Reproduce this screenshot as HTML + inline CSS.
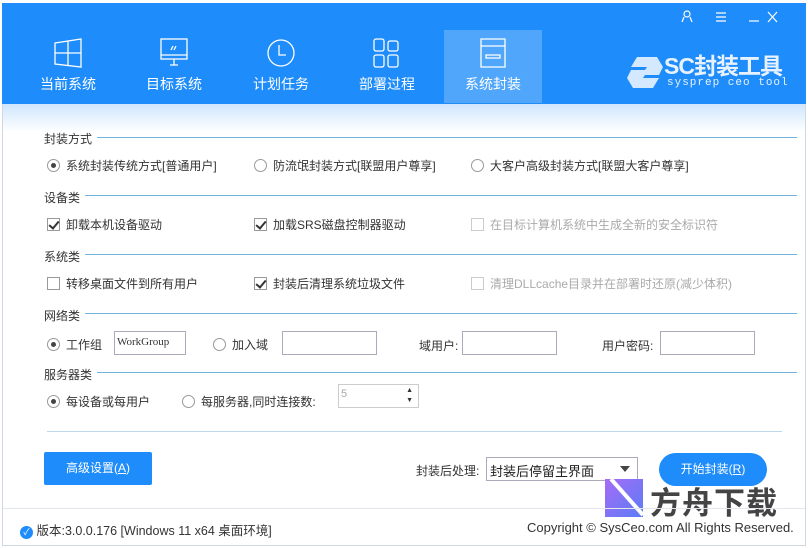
<!DOCTYPE html>
<html><head><meta charset="utf-8"><style>
*{margin:0;padding:0;box-sizing:border-box}
body{width:808px;height:548px;background:#fff;font-family:"Liberation Sans","Noto Sans CJK SC",sans-serif;font-size:12px;color:#333;position:relative;overflow:hidden}
.win{position:absolute;left:2px;top:3px;width:804px;height:543px;border:1px solid #cfd8e0;border-top:none;background:#fff}
.hdr{position:absolute;left:2px;top:3px;width:804px;height:101px;background:#1e8cfa}
.grad{position:absolute;left:3px;top:104px;width:802px;height:28px;background:linear-gradient(#cfe6fd,#fff)}
.tab{position:absolute;top:30px;width:98px;height:73px;color:#fff;font-size:14px;text-align:center}
.tab svg{display:block;margin:8px auto 6px}
.tab.sel{background:#4fa6fb}
.sec{position:absolute;left:44px;font-size:12px;color:#333}
.line{position:absolute;height:1px;background:#6fb4dc}
.it{position:absolute;font-size:12px;color:#333;white-space:nowrap}
.it.dis{color:#aaa}
.rb{display:inline-block;width:13px;height:13px;border:1px solid #999;border-radius:50%;vertical-align:-2px;margin-right:6px;position:relative;background:#fff}
.rb.on::after{content:"";position:absolute;left:3px;top:3px;width:5px;height:5px;border-radius:50%;background:#444}
.cb{display:inline-block;width:13px;height:13px;border:1px solid #999;vertical-align:-2px;margin-right:6px;position:relative;background:#fff}
.cb.on::after{content:"";position:absolute;left:3px;top:0px;width:4px;height:8px;border:solid #333;border-width:0 2px 2px 0;transform:rotate(40deg)}
.dis .cb{border-color:#ccc}
.inp{position:absolute;height:24px;border:1px solid #aab;background:#fff}
.btn{position:absolute;background:#1e8cfa;color:#fff;font-size:12px;text-align:center}
</style></head><body>
<div class="win"></div>
<div class="hdr"></div>
<div class="grad"></div>
<svg style="position:absolute;left:680px;top:10px" width="100" height="14"><g stroke="#fff" fill="none" stroke-width="1.2"><circle cx="7" cy="4" r="3"/><path d="M2 12 L4 7 M12 12 L10 7"/><path d="M36 3h10M36 7h10M36 11h10"/><path d="M69 11h10"/><path d="M97 2l-9 10M88 2l9 10"/></g></svg>
<div class="tab" style="left:19px"><svg width="30" height="30"><g stroke="#fff" fill="none" stroke-width="1.3"><path d="M2 5l26-4v28l-26-3z M15 3v25 M2 15h26"/></g></svg>当前系统</div>
<div class="tab" style="left:125px"><svg width="30" height="30"><g stroke="#fff" fill="none" stroke-width="1.3"><rect x="2" y="1" width="26" height="20"/><path d="M2 17h26 M11 27h8 M15 21v6 M14 8l-2 4 M17 8l-2 4"/></g></svg>目标系统</div>
<div class="tab" style="left:232px"><svg width="30" height="30"><g stroke="#fff" fill="none" stroke-width="1.3"><circle cx="15" cy="15" r="13"/><path d="M13 7v10h7"/></g></svg>计划任务</div>
<div class="tab" style="left:338px"><svg width="30" height="30"><g stroke="#fff" fill="none" stroke-width="1.3"><rect x="2" y="1" width="10" height="12" rx="2"/><rect x="16" y="3" width="10" height="10" rx="2"/><rect x="2" y="17" width="10" height="12" rx="2"/><rect x="16" y="17" width="10" height="12" rx="2"/></g></svg>部署过程</div>
<div class="tab sel" style="left:444px"><svg width="32" height="30"><g stroke="#fff" fill="none" stroke-width="1.3"><path d="M4 1h24v28h-24z M4 8h24 M9 17h14v3h-14z"/></g></svg>系统封装</div>
<svg style="position:absolute;left:625px;top:55px" width="40" height="35"><path d="M12 2h20l6 10-4 8h-14l-2 3h16l-6 10h-20l-6-10 4-8h14l2-3h-16z" fill="#e8f2ff" opacity=".9"/></svg>
<div style="position:absolute;left:664px;top:54px;color:#e8f2ff;font-size:23px;line-height:24px;font-weight:bold;letter-spacing:-1px">SC封装工具</div>
<div style="position:absolute;left:667px;top:77px;color:#e8f2ff;font-size:11px;line-height:12px;font-family:'Liberation Mono',monospace;letter-spacing:1px">sysprep ceo tool</div>

<div class="sec" style="top:130px">封装方式</div><div class="line" style="left:97px;width:700px;top:137px"></div>
<div class="it" style="left:47px;top:157px"><span class="rb on"></span>系统封装传统方式[普通用户]</div>
<div class="it" style="left:254px;top:157px"><span class="rb"></span>防流氓封装方式[联盟用户尊享]</div>
<div class="it" style="left:471px;top:157px"><span class="rb"></span>大客户高级封装方式[联盟大客户尊享]</div>

<div class="sec" style="top:189px">设备类</div><div class="line" style="left:85px;width:712px;top:195px"></div>
<div class="it" style="left:47px;top:216px"><span class="cb on"></span>卸载本机设备驱动</div>
<div class="it" style="left:254px;top:216px"><span class="cb on"></span>加载SRS磁盘控制器驱动</div>
<div class="it dis" style="left:471px;top:216px"><span class="cb"></span>在目标计算机系统中生成全新的安全标识符</div>

<div class="sec" style="top:248px">系统类</div><div class="line" style="left:85px;width:712px;top:254px"></div>
<div class="it" style="left:47px;top:275px"><span class="cb"></span>转移桌面文件到所有用户</div>
<div class="it" style="left:254px;top:275px"><span class="cb on"></span>封装后清理系统垃圾文件</div>
<div class="it dis" style="left:471px;top:275px"><span class="cb"></span>清理DLLcache目录并在部署时还原(减少体积)</div>

<div class="sec" style="top:307px">网络类</div><div class="line" style="left:85px;width:712px;top:313px"></div>
<div class="it" style="left:47px;top:336px"><span class="rb on"></span>工作组</div>
<div class="inp" style="left:114px;top:331px;width:72px;font-family:'Liberation Serif',serif;font-size:11px;padding:4px 2px">WorkGroup</div>
<div class="it" style="left:213px;top:336px"><span class="rb"></span>加入域</div>
<div class="inp" style="left:282px;top:331px;width:95px"></div>
<div class="it" style="left:419px;top:337px">域用户:</div>
<div class="inp" style="left:462px;top:331px;width:95px"></div>
<div class="it" style="left:602px;top:337px">用户密码:</div>
<div class="inp" style="left:660px;top:331px;width:95px"></div>

<div class="sec" style="top:366px">服务器类</div><div class="line" style="left:97px;width:700px;top:372px"></div>
<div class="it" style="left:47px;top:393px"><span class="rb on"></span>每设备或每用户</div>
<div class="it" style="left:182px;top:393px"><span class="rb"></span>每服务器,同时连接数:</div>
<div class="inp" style="left:338px;top:384px;width:81px;height:24px;border-color:#ccc;color:#aaa;padding:3px 2px;font-size:11px">5<span style="position:absolute;right:5px;top:1px;font-size:7px;color:#333;line-height:10px">▲<br>▼</span></div>
<div class="line" style="left:47px;width:735px;top:431px;background:#bcd9ea"></div>

<div class="btn" style="left:44px;top:452px;width:108px;height:33px;line-height:33px;border-radius:2px">高级设置(<u>A</u>)</div>
<div class="it" style="left:416px;top:462px">封装后处理:</div>
<div class="inp" style="left:486px;top:457px;width:152px;height:24px;padding:3px 3px;font-size:13px;color:#222">封装后停留主界面<span style="position:absolute;right:7px;top:8px;width:0;height:0;border:5px solid transparent;border-top:6px solid #444"></span></div>
<div class="btn" style="left:659px;top:453px;width:108px;height:33px;line-height:33px;border-radius:17px">开始封装(<u>R</u>)</div>

<svg style="position:absolute;left:605px;top:479px" width="38" height="38"><defs><linearGradient id="g" x1="0" y1="0" x2="1" y2="1"><stop offset="0" stop-color="#a56cf5"/><stop offset="1" stop-color="#5b7cf7"/></linearGradient></defs><rect width="38" height="38" fill="url(#g)"/><path d="M6 0l32 36" stroke="#fff" stroke-width="4"/></svg>
<div style="position:absolute;left:650px;top:478px;font-size:31px;font-weight:bold;color:#444;letter-spacing:1px">方舟下载</div>

<div class="line" style="left:3px;width:802px;top:508px;background:#e3e6ea"></div>
<div class="it" style="left:20px;top:520px;font-size:12.5px"><span style="display:inline-block;width:13px;height:13px;border-radius:50%;background:#1e8cfa;color:#fff;font-size:9px;text-align:center;line-height:13px;vertical-align:0">✓</span> 版本:3.0.0.176 [Windows 11 x64 桌面环境]</div>
<div class="it" style="left:527px;top:520px;font-size:13px">Copyright © SysCeo.com All Rights Reserved.</div>
</body></html>
